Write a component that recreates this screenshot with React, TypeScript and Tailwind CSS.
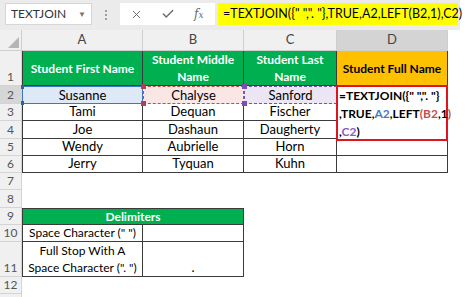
import { X, Check } from "lucide-react"

const font = "font-['Lato','Open_Sans',sans-serif]"

function RowHead({ n, active = false }: { n: number; active?: boolean }) {
  return (
    <div
      className={`flex items-end justify-center border-r border-b border-[#d4d4d4] text-[12px] leading-[17px] text-[#555] ${
        active ? "bg-[#d6d6d6]" : "bg-[#f0f0f0]"
      }`}
    >
      {n}
    </div>
  )
}

function ColHead({ label, active = false }: { label: string; active?: boolean }) {
  return (
    <div
      className={`flex items-center justify-center border-r border-b border-[#cfcfcf] text-[13px] text-[#444] ${
        active ? "bg-[#d4d4d4]" : "bg-[#f0f0f0]"
      }`}
    >
      {label}
    </div>
  )
}

function Cell({ text = "", left = false, small = false }: { text?: string; left?: boolean; small?: boolean }) {
  return (
    <div
      className={`flex items-end justify-center whitespace-nowrap border-r border-b border-[#3b3b3b] leading-[17px] text-black ${
        left ? "border-l" : ""
      } ${small ? "text-[12px]" : "text-[13px]"}`}
    >
      {text}
    </div>
  )
}

function EmptyRow({ n }: { n: number }) {
  return (
    <>
      <RowHead n={n} />
      <div />
      <div />
      <div />
      <div />
      <div />
    </>
  )
}

const people = [
  ["Tami", "Dequan", "Fischer"],
  ["Joe", "Dashaun", "Daugherty"],
  ["Wendy", "Aubrielle", "Horn"],
  ["Jerry", "Tyquan", "Kuhn"],
]

const headCls =
  "flex items-center justify-center border-r border-b border-[#3b3b3b] px-1 text-center text-[12px] font-bold leading-[17px]"

export default function App() {
  return (
    <div className={`w-[474px] h-[297px] overflow-hidden bg-white ${font}`}>
      {/* formula bar */}
      <div className="flex items-start h-[30px] w-[460px] bg-[#ebebeb] pt-[3px]">
        <div className="ml-[5px] flex h-[22px] w-[87px] items-center justify-between border border-[#d6d6d6] bg-white pl-[5px] pr-[5px] text-[12px] text-[#333]">
          <span>TEXTJOIN</span>
          <span className="text-[8px] text-[#777]">▼</span>
        </div>
        <div className="flex w-[28px] flex-col items-center justify-center gap-[2px] pt-[7px]">
          <span className="h-[2px] w-[2px] bg-[#a0a0a0]" />
          <span className="h-[2px] w-[2px] bg-[#a0a0a0]" />
          <span className="h-[2px] w-[2px] bg-[#a0a0a0]" />
        </div>
        <div className="flex h-[22px] w-[95px] items-center bg-white pl-[10px] text-[#6a6a6a]">
          <X size={13} strokeWidth={1.8} />
          <Check size={14} strokeWidth={2.4} className="ml-[18px]" />
          <span className="ml-[19px] font-['DejaVu_Serif',serif] text-[12px] italic">
            f<span className="text-[9px]">x</span>
          </span>
        </div>
        <div className="ml-[3px] flex h-[22px] w-[240px] items-center bg-[#ffff00] pl-[5px] text-[12.5px] text-black whitespace-nowrap">
          {'=TEXTJOIN({" ",". "},TRUE,A2,LEFT(B2,1),C2)'}
        </div>
      </div>

      {/* sheet */}
      <div className="grid grid-cols-[22px_121px_101px_93px_111px_1fr] grid-rows-[21px_35px_18px_17px_18px_17px_17px_17px_18px_17px_17px_35px_17px_17px]">
        {/* column headers */}
        <div className="relative border-r border-b border-[#cfcfcf] bg-[#f0f0f0]">
          <svg width="22" height="21" className="absolute inset-0">
            <polygon points="19,7 19,18 8,18" fill="#b5b5b5" />
          </svg>
        </div>
        <ColHead label="A" />
        <ColHead label="B" />
        <ColHead label="C" />
        <ColHead label="D" active />
        <div />

        {/* row 1 */}
        <RowHead n={1} />
        <div className={`${headCls} border-l bg-[#00b050] text-white`}>Student First Name</div>
        <div className={`${headCls} bg-[#00b050] text-white`}>Student Middle Name</div>
        <div className={`${headCls} bg-[#00b050] text-white`}>Student Last Name</div>
        <div className={`${headCls} bg-[#ffc000] text-black`}>Student Full Name</div>
        <div />

        {/* row 2 */}
        <RowHead n={2} active />
        <div className="relative flex items-end justify-center border border-[#4472c4] bg-[#dde9f6] text-[13px] leading-[16px]">
          Susanne
          <span className="absolute -left-[2px] -top-[2px] h-[4px] w-[3px] bg-[#2e6b6b]" />
          <span className="absolute -left-[2px] -bottom-[2px] h-[4px] w-[3px] bg-[#2e6b6b]" />
        </div>
        <div className="relative flex items-end justify-center border border-dashed border-[#c0504d] bg-[#fbe6e6] text-[13px] leading-[16px]">
          Chalyse
          <span className="absolute -left-[3px] -top-[3px] h-[5px] w-[5px] bg-[#b0405a]" />
          <span className="absolute -left-[3px] -bottom-[3px] h-[5px] w-[5px] bg-[#b0405a]" />
        </div>
        <div className="relative flex items-end justify-center border border-dashed border-[#7a4fb0] bg-[#ece5f3] text-[13px] leading-[16px]">
          Sanford
          <span className="absolute -left-[3px] -top-[3px] h-[5px] w-[5px] bg-[#7a4fb0]" />
          <span className="absolute -left-[3px] -bottom-[3px] h-[5px] w-[5px] bg-[#7a4fb0]" />
        </div>
        <div className="relative border-r border-b border-[#3b3b3b]">
          {/* cell being edited, spills over D3:D4 */}
          <div className="absolute -left-[1px] -top-[1px] z-10 h-[56px] w-[112px] border-2 border-[#e0141e] bg-white pl-[1px] text-[12px] font-bold leading-[18px] text-black whitespace-nowrap">
            <div>{'=TEXTJOIN({" ",". "}'}</div>
            <div>
              ,TRUE,<span className="text-[#4a7ac4]">A2</span>,LEFT
              <span className="text-[#c0504d]">(B2</span>,1
              <span className="text-[#c0504d]">)</span>
            </div>
            <div>
              ,<span className="text-[#8a5cc0]">C2</span>)
            </div>
          </div>
        </div>
        <div />

        {/* rows 3-6 */}
        {people.map((p, i) => (
          <div key={i} className="contents">
            <RowHead n={i + 3} />
            <Cell text={p[0]} left />
            <Cell text={p[1]} />
            <Cell text={p[2]} />
            <Cell />
            <div />
          </div>
        ))}

        <EmptyRow n={7} />
        <EmptyRow n={8} />

        {/* row 9 */}
        <RowHead n={9} />
        <div className="col-span-2 flex items-center justify-center border border-[#3b3b3b] bg-[#00b050] text-[12px] font-bold text-white">
          Delimiters
        </div>
        <div />
        <div />
        <div />

        {/* row 10 */}
        <RowHead n={10} />
        <Cell text={'Space Character (" ")'} left small />
        <Cell />
        <div />
        <div />
        <div />

        {/* row 11 */}
        <RowHead n={11} />
        <div className="flex flex-col items-center justify-end whitespace-nowrap border-l border-r border-b border-[#3b3b3b] text-center text-[12px] leading-[17px]">
          <span>Full Stop With A</span>
          <span>{'Space Character (". ")'}</span>
        </div>
        <Cell text="." />
        <div />
        <div />
        <div />

        <EmptyRow n={12} />
        <EmptyRow n={13} />
      </div>
    </div>
  )
}
